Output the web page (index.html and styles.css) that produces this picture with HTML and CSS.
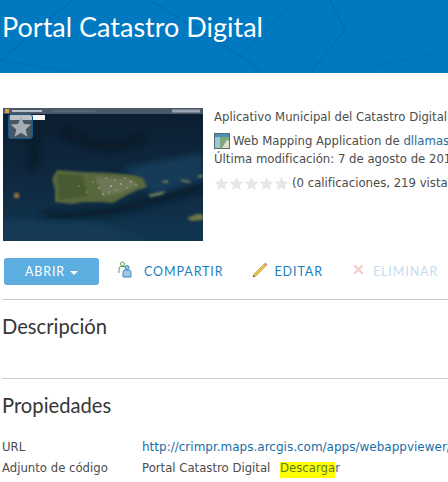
FILE: index.html
```html
<!DOCTYPE html>
<html lang="es">
<head>
<meta charset="utf-8">
<title>Portal Catastro Digital</title>
<link rel="stylesheet" href="styles.css">
</head>
<body>
<header class="banner">
  <svg class="banner-lines" viewBox="0 0 448 73" preserveAspectRatio="none" aria-hidden="true">
    <g fill="none" stroke="#0063a3" stroke-opacity=".45">
      <path d="M0 62 L22 42 L72 0" stroke-width="1.5"/>
      <path d="M0 60 L60 70 L75 73" stroke-width="1"/>
      <path d="M150 0 L250 62 L262 73" stroke-width="1.5"/>
      <path d="M225 73 L295 0" stroke-width="1"/>
      <path d="M330 0 L345 30 L310 73" stroke-width="1.2"/>
      <path d="M270 40 L340 73" stroke-width=".7"/>
      <path d="M448 50 L380 65 L360 73" stroke-width=".7"/>
      <path d="M0 52 L60 40 L120 60" stroke-width=".6"/>
    </g>
  </svg>
  <h1 class="title">Portal Catastro Digital</h1>
</header>

<section class="summary">
  <div class="thumb">
    <svg class="thumb-map" viewBox="0 0 200 133" aria-hidden="true">
      <defs>
        <linearGradient id="sea" x1="0" y1="0" x2="0" y2="1">
          <stop offset="0" stop-color="#0c1d30"/>
          <stop offset=".6" stop-color="#0f2a42"/>
          <stop offset="1" stop-color="#113650"/>
        </linearGradient>
        <filter id="soft" x="-10%" y="-10%" width="120%" height="120%"><feGaussianBlur stdDeviation=".8"/></filter>
        <filter id="softer" x="-20%" y="-20%" width="140%" height="140%"><feGaussianBlur stdDeviation="3.500"/></filter>
      </defs>
      <rect width="200" height="133" fill="url(#sea)"/>
      <g filter="url(#softer)" fill="none" stroke="#08141f" stroke-width="6" opacity=".85">
        <path d="M28 20 L32 48 L28 62"/>
        <path d="M60 22 Q100 50 140 30"/>
        <path d="M40 108 Q110 108 150 92 L200 78"/>
      </g>
      <path d="M120 60 L200 45 L200 72 L150 88 Z" fill="#133a58" filter="url(#softer)"/>
      <path d="M0 112 L90 114 L150 133 L0 133 Z" fill="#133a56" filter="url(#softer)"/>
      <g filter="url(#soft)">
        <path d="M54 62 L80 64 L107 65 L130 67 L140 70 L144 79 L135 82 L124 87 L110 95 L97 94 L80 94 L69 96 L52 94 L52 82 L49 71 Z" fill="#59683e"/>
        <path d="M54 66 L80 67 L84 88 L56 92 Z" fill="#475a32"/>
        <path d="M92 69 L128 71 L136 77 L118 85 L100 88 Z" fill="#6e7654"/>
        <path d="M11 85 h5 v5 h-5 Z" fill="#96703c"/>
        <path d="M145 87 L162 83 L160 86 L148 89 Z" fill="#7a845c"/>
        <path d="M159 73 L165 72 L165 75 L160 75 Z" fill="#6b7558"/>
        <path d="M177 71 L187 73 L188 75 L180 74 Z" fill="#6b7558"/>
        <path d="M194 68 L200 66 L200 69 L196 70 Z" fill="#6b7558"/>
        <path d="M184 110 L194 106 L200 106 L200 112 L188 113 Z" fill="#6c7548"/>
      </g>
      <g fill="#d4d6c8">
        <circle cx="90" cy="74" r=".6"/><circle cx="96" cy="80" r=".7"/><circle cx="103" cy="70" r=".6"/>
        <circle cx="108" cy="78" r=".8"/><circle cx="112" cy="72" r=".6"/><circle cx="118" cy="76" r=".7"/>
        <circle cx="122" cy="70" r=".6"/><circle cx="128" cy="74" r=".7"/><circle cx="133" cy="77" r=".6"/>
        <circle cx="100" cy="86" r=".7"/><circle cx="106" cy="84" r=".6"/><circle cx="113" cy="82" r=".6"/>
        <circle cx="76" cy="78" r=".5"/><circle cx="84" cy="84" r=".5"/><circle cx="124" cy="80" r=".6"/>
      </g>
      <rect width="200" height="6" fill="#4a5868"/>
      <rect x="2" y="1" width="4" height="4" fill="#d8a040"/>
      <rect x="9" y="2" width="30" height="2" fill="#b8c0c8"/>
      <rect x="50" y="2.500" width="42" height="1" fill="#66727e"/>
      <rect x="169" y="1.500" width="28" height="3" fill="#9aa4ae"/>
      <rect x="7" y="7" width="35" height="5" fill="#f4f4f4"/>
    </svg>
    <div class="star-tile">
      <svg class="star-big" viewBox="0 0 24 24" aria-hidden="true"><path d="M12 1l3.200 7.600 8 .7-6.100 5.300 1.900 7.900L12 18.300l-7 4.200 1.900-7.900L.8 9.300l8-.7z"/></svg>
    </div>
  </div>
  <div class="meta">
    <p class="snippet">Aplicativo Municipal del Catastro Digital</p>
    <p class="type-line">
      <svg class="type-icon" viewBox="0 0 16 16" aria-hidden="true">
        <rect x=".5" y=".5" width="15" height="15" fill="#f4f6f6" stroke="#5a6a70"/>
        <rect x="1" y="1" width="14" height="3" fill="#4d8fb5"/>
        <rect x="1" y="4" width="5" height="11" fill="#9cc6dc"/>
        <path d="M6 4h9v11H6z" fill="#7fa678"/>
        <path d="M8 15l5-8 2 1v7z" fill="#d9dfc8"/>
      </svg>
      <span>Web Mapping Application de <a class="link-plain" href="#">dllamas</a></span>
    </p>
    <p class="modified">Última modificación: 7 de agosto de 2015</p>
    <div class="rating">
      <span class="stars" aria-hidden="true">
        <svg viewBox="0 0 24 24"><path d="M12 1l3.200 7.600 8 .7-6.100 5.300 1.900 7.900L12 18.300l-7 4.200 1.900-7.900L.8 9.300l8-.7z"/></svg>
        <svg viewBox="0 0 24 24"><path d="M12 1l3.200 7.600 8 .7-6.100 5.300 1.900 7.900L12 18.300l-7 4.200 1.900-7.900L.8 9.300l8-.7z"/></svg>
        <svg viewBox="0 0 24 24"><path d="M12 1l3.200 7.600 8 .7-6.100 5.300 1.900 7.900L12 18.300l-7 4.200 1.900-7.900L.8 9.300l8-.7z"/></svg>
        <svg viewBox="0 0 24 24"><path d="M12 1l3.200 7.600 8 .7-6.100 5.300 1.900 7.900L12 18.300l-7 4.200 1.900-7.900L.8 9.300l8-.7z"/></svg>
        <svg viewBox="0 0 24 24"><path d="M12 1l3.200 7.600 8 .7-6.100 5.300 1.900 7.900L12 18.300l-7 4.200 1.900-7.900L.8 9.300l8-.7z"/></svg>
      </span>
      <span>(0 calificaciones, 219 vistas)</span>
    </div>
  </div>
</section>

<nav class="actions">
  <a class="btn-open" href="#">ABRIR <span class="caret"></span></a>
  <a class="action action-share" href="#">
    <svg class="action-icon" viewBox="0 0 14 17" aria-hidden="true">
      <g fill="none" stroke="#5a9a50" stroke-width="1">
        <circle cx="4.500" cy="3" r="2"/>
        <path d="M1 12V8q0-2.500 2-2.500h3q2 0 2 2"/>
      </g>
      <g fill="#9cc8e6" stroke="#3d87c0" stroke-width="1">
        <circle cx="9" cy="6.500" r="2"/>
        <path d="M5 16v-4.500q0-2.500 2-2.500h4q2 0 2 2.500V16z"/>
      </g>
    </svg>
    COMPARTIR
  </a>
  <a class="action action-edit" href="#">
    <svg class="action-icon" viewBox="0 0 16 16" aria-hidden="true">
      <path d="M1 15l1-3L12 2l2 2L4 14z" fill="#e8c24a" stroke="#a88a30" stroke-width=".5"/>
      <path d="M12 2l1.500-1.500 2 2L14 4z" fill="#d88a80"/>
      <path d="M1 15l.5-2 1.500 1.500z" fill="#444"/>
    </svg>
    EDITAR
  </a>
  <a class="action action-delete" href="#">
    <svg class="action-icon" viewBox="0 0 12 12" aria-hidden="true">
      <path d="M1.500 1.500l9 9M10.500 1.500l-9 9" stroke="#f2cfc8" stroke-width="2.400" fill="none"/>
    </svg>
    ELIMINAR
  </a>
</nav>

<section class="block block-desc">
  <h2 class="block-title">Descripción</h2>
</section>

<section class="block block-props">
  <h2 class="block-title">Propiedades</h2>
  <dl class="props">
    <dt>URL</dt>
    <dd><a class="link" href="#">http://crimpr.maps.arcgis.com/apps/webappviewer/index.html</a></dd>
    <dt>Adjunto de código</dt>
    <dd>Portal Catastro Digital <span class="download"><mark class="hl">Descarga</mark><span class="tail">r</span></span></dd>
  </dl>
</section>
</body>
</html>
```

FILE: styles.css
```css
html, body {
  margin: 0;
  padding: 0;
  background: #fff;
  width: 448px;
  height: 482px;
  overflow: hidden;
}
body {
  font-family: "DejaVu Sans", Verdana, sans-serif;
  font-size: 11.7px;
  color: #4c4c4c;
}
p, h1, h2, dl, dd { margin: 0; }

.banner {
  position: relative;
  height: 73px;
  background: #0079c1;
  overflow: hidden;
}
.banner-lines {
  position: absolute;
  inset: 0;
  width: 100%;
  height: 100%;
}
.title {
  position: relative;
  padding: 9px 0 0 2px;
  font-family: Lato, sans-serif;
  font-weight: 400;
  font-size: 27px;
  line-height: 36px;
  color: #fff;
  white-space: nowrap;
}

.summary {
  display: flex;
  gap: 11px;
  padding: 35px 0 0 3px;
  height: 133px;
  width: 600px;
}
.thumb {
  position: relative;
  width: 200px;
  height: 133px;
  flex: none;
}
.thumb-map {
  display: block;
  width: 200px;
  height: 133px;
}
.star-tile {
  position: absolute;
  left: 5px;
  top: 6px;
  width: 23px;
  height: 23px;
  background: rgba(130,140,150,.5);
  border: 1px solid #14598c;
  border-radius: 3px;
  display: flex;
  align-items: center;
  justify-content: center;
}
.star-big {
  width: 22px;
  height: 22px;
  fill: #a6adb4;
}

.meta {
  white-space: nowrap;
  padding-top: 2px;
}
.snippet {
  line-height: 14px;
}
.type-line {
  margin-top: 9px;
  line-height: 16px;
  display: flex;
  align-items: center;
  gap: 3px;
}
.type-icon {
  width: 16px;
  height: 16px;
  flex: none;
}
.link-plain {
  color: #2a6a96;
  text-decoration: none;
}
.modified {
  line-height: 16px;
  margin-top: 2px;
}
.rating {
  display: flex;
  align-items: center;
  gap: 4px;
  margin-top: 8px;
  line-height: 16px;
}
.stars {
  display: flex;
  width: 74px;
}
.stars svg {
  width: 15px;
  height: 15px;
  flex: none;
  fill: #e6e6e6;
}

.actions {
  display: flex;
  align-items: center;
  height: 27px;
  margin: 17px 0 0 4px;
  width: 520px;
  font-family: Lato, sans-serif;
  font-size: 12.5px;
  letter-spacing: .9px;
}
.btn-open {
  width: 95px;
  height: 27px;
  border-radius: 3px;
  background: #5cade0;
  color: #fff;
  display: flex;
  align-items: center;
  justify-content: center;
  gap: 5px;
  text-decoration: none;
  flex: none;
}
.caret {
  width: 0;
  height: 0;
  border-left: 4px solid transparent;
  border-right: 4px solid transparent;
  border-top: 4px solid #fff;
  margin-top: 2px;
}
.action {
  display: flex;
  align-items: center;
  text-decoration: none;
  color: #1a7fc1;
  flex: none;
}
.action-icon {
  flex: none;
  display: block;
  margin-top: -4px;
}
.action-share { margin-left: 19px; gap: 12px; }
.action-share .action-icon { width: 14px; height: 17px; }
.action-edit { margin-left: 29px; gap: 6px; }
.action-edit .action-icon { width: 16px; height: 16px; }
.action-delete { margin-left: 30px; gap: 9px; color: #c4def0; }
.action-delete .action-icon { width: 11px; height: 11px; }

.block {
  margin-left: 2px;
  width: 446px;
  border-top: 1px solid #ccc;
}
.block-desc {
  margin-top: 14px;
  height: 78px;
}
.block-title {
  font-family: Lato, sans-serif;
  font-weight: 400;
  font-size: 20.2px;
  line-height: 26px;
  color: #363636;
  padding-top: 13px;
}
.block-props { height: 103px; }
.props {
  display: grid;
  grid-template-columns: 140px 1fr;
  grid-auto-rows: 21px;
  margin-top: 19px;
  line-height: 21px;
  white-space: nowrap;
  overflow: hidden;
}
.link {
  color: #1a6ea8;
  font-size: 12px;
  text-decoration: none;
}
.download { margin-left: 6px; }
.hl {
  background: #ffff00;
  color: #5f7d22;
  display: inline-block;
  height: 16px;
  line-height: 12px;
  vertical-align: top;
  margin-top: 4px;
}
.tail { color: #1a6ea8; }
```
